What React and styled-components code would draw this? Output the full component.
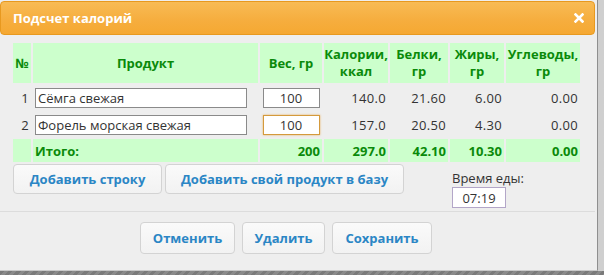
import React from "react";
import styled, { createGlobalStyle } from "styled-components";

const Global = createGlobalStyle`
  html, body {
    margin: 0;
    padding: 0;
    width: 604px;
    height: 275px;
    overflow: hidden;
    background: linear-gradient(90deg, #dcdcdc, #cfcfcf);
    font-family: "Open Sans", "DejaVu Sans", sans-serif;
  }
`;

const rows = [
  { n: 1, name: "Сёмга свежая", w: "100", kcal: "140.0", p: "21.60", f: "6.00", c: "0.00" },
  { n: 2, name: "Форель морская свежая", w: "100", kcal: "157.0", p: "20.50", f: "4.30", c: "0.00", focus: true },
];

const CloseIcon = () => (
  <svg width="10" height="10" viewBox="0 0 10 10">
    <path d="M1.5 1.5 L8.5 8.5 M8.5 1.5 L1.5 8.5" stroke="#fff" strokeWidth="2.6" strokeLinecap="square" />
  </svg>
);

export default () => (
  <>
    <Global />
    <Dialog>
      <TitleBar>
        <span>Подсчет калорий</span>
        <CloseIcon />
      </TitleBar>
      <Content>
        <Table>
          <colgroup>
            <col style={{ width: 18 }} />
            <col style={{ width: 225 }} />
            <col style={{ width: 62 }} />
            <col style={{ width: 64 }} />
            <col style={{ width: 58 }} />
            <col style={{ width: 54 }} />
            <col style={{ width: 74 }} />
          </colgroup>
          <thead>
            <tr>
              <Th>№</Th>
              <Th>Продукт</Th>
              <Th>Вес, гр</Th>
              <Th>Калории,<br />ккал</Th>
              <Th>Белки,<br />гр</Th>
              <Th>Жиры,<br />гр</Th>
              <Th>Углеводы,<br />гр</Th>
            </tr>
          </thead>
          <tbody>
            {rows.map((r) => (
              <tr key={r.n}>
                <Td $align="right">{r.n}</Td>
                <Td><NameInput value={r.name} readOnly /></Td>
                <Td $align="center"><WeightInput value={r.w} readOnly $focus={r.focus} /></Td>
                <Td $align="right">{r.kcal}</Td>
                <Td $align="right">{r.p}</Td>
                <Td $align="right">{r.f}</Td>
                <Td $align="right">{r.c}</Td>
              </tr>
            ))}
            <tr>
              <TotalTd />
              <TotalTd $align="left">Итого:</TotalTd>
              <TotalTd>200</TotalTd>
              <TotalTd>297.0</TotalTd>
              <TotalTd>42.10</TotalTd>
              <TotalTd>10.30</TotalTd>
              <TotalTd>0.00</TotalTd>
            </tr>
          </tbody>
        </Table>
        <ActionRow>
          <Button $w={149}>Добавить строку</Button>
          <Button $w={239}>Добавить свой продукт в базу</Button>
          <TimeBox>
            <TimeLabel>Время еды:</TimeLabel>
            <TimeInput value="07:19" readOnly />
          </TimeBox>
        </ActionRow>
      </Content>
      <ButtonPane>
        <Button $w={95} $h={32}>Отменить</Button>
        <Button $w={83} $h={32}>Удалить</Button>
        <Button $w={100} $h={32}>Сохранить</Button>
      </ButtonPane>
    </Dialog>
    <PageRow>
      <Num $c="#222" $ml={36}>В</Num>
      <Num $c="#2f8f2f" $ml={160}>1316.00</Num>
      <Num $c="#c0392b" $ml={30}>127.83</Num>
      <Num $c="#4f7f1f" $ml={36}>37.71</Num>
      <Num $c="#9a8a2a" $ml={80}>129.20</Num>
    </PageRow>
  </>
);

const Dialog = styled.div`
  width: 598px;
  height: 271px;
  box-sizing: border-box;
  background: #eeeeee;
  border-right: 1px solid #8f8f8f;
  border-bottom: 1px solid #c8c8c8;
  padding: 1px 2px 0 0;
  display: flex;
  flex-direction: column;
`;

const TitleBar = styled.div`
  height: 34px;
  box-sizing: border-box;
  border: 1px solid #e8991f;
  border-radius: 4px;
  background: linear-gradient(#f8bb55, #f6ae3f 55%, #f5a832);
  color: #fff;
  font-weight: bold;
  font-size: 13px;
  display: flex;
  align-items: center;
  justify-content: space-between;
  padding: 0 10px 1px 12px;
`;

const Content = styled.div`
  padding: 6px 0 0 13px;
  border-bottom: 1px solid #dcdcdc;
  height: 177px;
  box-sizing: border-box;
`;

const Table = styled.table`
  border-spacing: 2px;
  margin-left: -2px;
  table-layout: fixed;
  font-size: 13px;
  color: #333;
`;

const Th = styled.th`
  background: #ccffcc;
  color: #0a8a0a;
  font-size: 13px;
  font-weight: bold;
  height: 40px;
  padding: 0;
  line-height: 17px;
  text-align: center;
`;

const Td = styled.td`
  text-align: ${(p) => p.$align || "left"};
  padding: 1px 2px 0;
  height: 24px;
  font-size: 13px;
  letter-spacing: 0.3px;
`;

const TotalTd = styled.td`
  background: #ccffcc;
  color: #0a8a0a;
  font-weight: bold;
  text-align: ${(p) => p.$align || "right"};
  height: 23px;
  padding: 0 2px;
  font-size: 13px;
`;

const Field = styled.input`
  box-sizing: border-box;
  height: 20px;
  border: 1px solid #8a8a8a;
  background: #fff;
  font-family: inherit;
  font-size: 13px;
  color: #333;
  padding: 0 2px;
  outline: none;
`;

const NameInput = styled(Field)`
  width: 212px;
  display: block;
`;

const WeightInput = styled(Field)`
  width: 57px;
  text-align: center;
  border-color: ${(p) => (p.$focus ? "#d49a3c" : "#8a8a8a")};
  box-shadow: ${(p) => (p.$focus ? "0 0 2px #e8b060" : "none")};
`;

const ActionRow = styled.div`
  display: flex;
  gap: 3px;
`;

const Button = styled.button`
  width: ${(p) => p.$w}px;
  height: ${(p) => p.$h || 30}px;
  box-sizing: border-box;
  border: 1px solid #d3d3d3;
  border-radius: 4px;
  background: linear-gradient(#fafafa, #f2f2f2);
  color: #2b86c5;
  font-family: inherit;
  font-weight: bold;
  font-size: 13px;
  padding: 0;
`;

const TimeBox = styled.div`
  margin-left: 45px;
  margin-top: 6px;
  display: flex;
  flex-direction: column;
  align-items: flex-start;
`;

const TimeLabel = styled.span`
  font-size: 13px;
  color: #333;
  line-height: 16px;
`;

const TimeInput = styled(Field)`
  width: 54px;
  height: 21px;
  border-color: #b3a6c8;
  text-align: center;
  margin-top: 1px;
`;

const ButtonPane = styled.div`
  display: flex;
  gap: 7px;
  padding: 10px 0 0 140px;
`;

const PageRow = styled.div`
  height: 4px;
  overflow: hidden;
  display: flex;
  font-size: 13px;
  line-height: 14px;
  padding-top: 1px;
  background: repeating-linear-gradient(135deg, #7a7a7a 0 3px, #8a8a8a 3px 6px);
`;

const Num = styled.span`
  color: ${(p) => p.$c};
  margin-left: ${(p) => p.$ml}px;
`;
